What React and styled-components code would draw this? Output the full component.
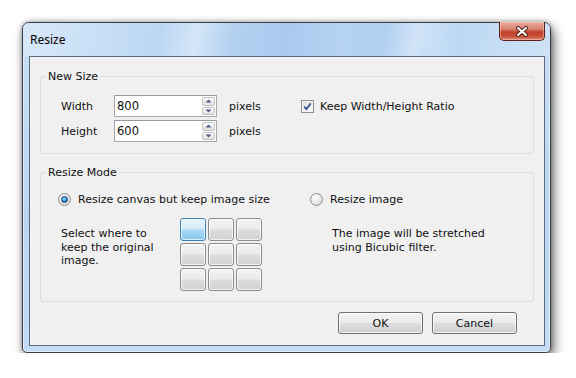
import React from 'react';
import styled, { createGlobalStyle } from 'styled-components';

const GlobalStyle = createGlobalStyle`
  html, body {
    margin: 0;
    background: #fff;
  }
  body {
    font-family: "DejaVu Sans", sans-serif;
    font-size: 11px;
    color: #111;
  }
`;

const Page = styled.div`
  padding: 22px 0 0 22px;
`;

const Window = styled.div`
  box-sizing: border-box;
  width: 529px;
  height: 331px;
  display: flex;
  flex-direction: column;
  padding: 0 5px 6px 6px;
  border: 1px solid #3a3f47;
  border-radius: 7px 7px 5px 5px;
  background: linear-gradient(180deg, #c9def5 0%, #bcd6f1 60%, #c3dbf4 100%);
  box-shadow: 3px 5px 12px rgba(0, 0, 0, 0.55), 0 0 5px rgba(0, 0, 0, 0.35),
    inset 0 0 0 1px rgba(255, 255, 255, 0.55);
`;

const TitleBar = styled.div`
  height: 33px;
  margin: 0 -5px 0 -6px;
  padding: 0 5px 0 7px;
  display: flex;
  justify-content: space-between;
  align-items: flex-start;
  border-radius: 6px 6px 0 0;
  background: linear-gradient(
    100deg,
    #d8e8f8 0%,
    #c9dff6 14%,
    #bcd7f4 26%,
    #d3e5f8 33%,
    #b3d0f0 40%,
    #a9c9ee 50%,
    #b5d2f1 60%,
    #b0cff1 68%,
    #d0e3f8 74%,
    #bdd8f4 82%,
    #cfe2f7 100%
  );
`;

const Title = styled.span`
  margin-top: 8px;
  font-family: "Segoe UI", "Noto Sans", "Liberation Sans", sans-serif;
  font-size: 12px;
  color: #000;
`;

const CloseButton = styled.div`
  width: 46px;
  height: 19px;
  margin-top: -1px;
  box-sizing: border-box;
  display: flex;
  align-items: center;
  justify-content: center;
  border: 1px solid #5a1f16;
  border-top: none;
  border-radius: 0 0 5px 5px;
  background: linear-gradient(180deg, #e9a99b 0%, #d9826f 40%, #c0412a 55%, #c8513a 80%, #dd8a74 100%);
  box-shadow: inset 0 0 0 1px rgba(255, 220, 210, 0.45);
`;

const Client = styled.div`
  flex: 1;
  display: flex;
  flex-direction: column;
  padding: 13px 10px 11px 10px;
  background: #f0f0f0;
  border: 1px solid #5b6c7d;
`;

const Group = styled.fieldset`
  margin: 0;
  padding: 0;
  border: 1px solid #d5dfe5;
  border-radius: 3px;
  min-width: 0;
  & + & {
    margin-top: 12px;
  }
`;

const Legend = styled.legend`
  margin-left: 5px;
  padding: 0 2px;
  line-height: 13px;
`;

const GroupBody = styled.div`
  padding: ${(p) => p.$pad};
`;

const SizeRows = styled.div`
  display: grid;
  grid-template-columns: 53px 103px 84px 1fr;
  grid-template-rows: 22px 22px;
  row-gap: 3px;
  align-items: center;
`;

const Label = styled.span``;

const Unit = styled.span`
  padding-left: 12px;
`;

const SpinField = styled.div`
  box-sizing: border-box;
  height: 22px;
  display: flex;
  align-items: stretch;
  background: #fff;
  border: 1px solid #a7a7a7;
  border-top-color: #9a9a9a;
`;

const SpinValue = styled.span`
  flex: 1;
  display: flex;
  align-items: center;
  padding-left: 2px;
  font-size: 11.5px;
`;

const SpinButtons = styled.div`
  width: 13px;
  margin: 1px 1px 1px 0;
  display: flex;
  flex-direction: column;
  gap: 1px;
`;

const SpinButton = styled.div`
  flex: 1;
  display: flex;
  align-items: center;
  justify-content: center;
  border: 1px solid #c2c2c2;
  border-radius: 2px;
  background: linear-gradient(180deg, #fafafa 0%, #ececec 50%, #e1e1e1 100%);
`;

const CheckRow = styled.label`
  grid-column: 4;
  grid-row: 1;
  display: flex;
  align-items: center;
  gap: 6px;
`;

const Box = styled.span`
  box-sizing: border-box;
  width: 13px;
  height: 13px;
  display: flex;
  align-items: center;
  justify-content: center;
  border: 1px solid #8e8f8f;
  background: linear-gradient(135deg, #d6d6d6 0%, #f4f4f4 60%, #fdfdfd 100%);
  box-shadow: inset 0 0 0 1px #f4f4f4;
`;

const ModeColumns = styled.div`
  display: grid;
  grid-template-columns: 252px 1fr;
`;

const Mode = styled.div`
  display: flex;
  flex-direction: column;
`;

const RadioRow = styled.label`
  display: flex;
  align-items: center;
  gap: 7px;
  height: 13px;
`;

const Radio = styled.span`
  box-sizing: border-box;
  width: 13px;
  height: 13px;
  border-radius: 50%;
  display: flex;
  align-items: center;
  justify-content: center;
  border: 1px solid #8e8f8f;
  background: radial-gradient(circle at 40% 35%, #fefefe 0%, #e6e6e6 55%, #cfcfcf 100%);
  &::after {
    content: "";
    display: ${(p) => (p.$checked ? 'block' : 'none')};
    width: 5px;
    height: 5px;
    border-radius: 50%;
    border: 1px solid #1b3f6e;
    background: radial-gradient(circle at 40% 35%, #a8e3ff 0%, #2a8ad4 55%, #14508f 100%);
  }
`;

const ModeBody = styled.div`
  display: flex;
  margin-top: 12px;
  padding-left: ${(p) => p.$indent}px;
`;

const Note = styled.p`
  box-sizing: border-box;
  flex: none;
  margin: 9px 0 0;
  width: ${(p) => p.$width}px;
  padding-right: ${(p) => p.$gap || 0}px;
  line-height: 13.5px;
`;

const AnchorGrid = styled.div`
  display: grid;
  grid-template-columns: repeat(3, 26px);
  grid-auto-rows: 23px;
  gap: 2px;
`;

const AnchorCell = styled.div`
  box-sizing: border-box;
  border-radius: 3px;
  border: 1px solid ${(p) => (p.$selected ? '#3c7fb1' : '#8c8c8c')};
  background: ${(p) =>
    p.$selected
      ? 'linear-gradient(180deg, #e8f5fd 0%, #d3ecfa 48%, #a7d9f5 52%, #86c6ec 100%)'
      : 'linear-gradient(180deg, #f3f3f3 0%, #ebebeb 48%, #dddddd 52%, #d2d2d2 100%)'};
  box-shadow: inset 0 0 0 1px rgba(255, 255, 255, 0.7);
`;

const ButtonRow = styled.div`
  margin-top: auto;
  display: flex;
  justify-content: flex-end;
  gap: 9px;
  padding-right: 17px;
`;

const Button = styled.button`
  width: 85px;
  height: 22px;
  padding: 0;
  font: inherit;
  color: #111;
  border: 1px solid #707070;
  border-radius: 3px;
  background: linear-gradient(180deg, #f2f2f2 0%, #ebebeb 48%, #dddddd 52%, #cfcfcf 100%);
  box-shadow: inset 0 0 0 1px rgba(255, 255, 255, 0.75);
`;

const Arrow = ({ up }) => (
  <svg width="7" height="4" viewBox="0 0 7 4">
    <path d={up ? 'M0.5 3.5 L3.5 0.5 L6.5 3.5 Z' : 'M0.5 0.5 L3.5 3.5 L6.5 0.5 Z'} fill="#4c6087" />
  </svg>
);

const SpinBox = ({ value }) => (
  <SpinField>
    <SpinValue>{value}</SpinValue>
    <SpinButtons>
      <SpinButton>
        <Arrow up />
      </SpinButton>
      <SpinButton>
        <Arrow />
      </SpinButton>
    </SpinButtons>
  </SpinField>
);

const CloseGlyph = () => (
  <svg width="14" height="11" viewBox="0 0 14 11">
    <path d="M3 2 L11 9 M11 2 L3 9" stroke="#4a1a12" strokeWidth="4" strokeLinecap="round" />
    <path d="M3 2 L11 9 M11 2 L3 9" stroke="#fff" strokeWidth="2.2" strokeLinecap="round" />
  </svg>
);

const CheckMark = () => (
  <svg width="9" height="9" viewBox="0 0 9 9">
    <path d="M1.2 4.6 L3.4 7 L7.8 1.4" fill="none" stroke="#3b4f92" strokeWidth="1.8" />
  </svg>
);

const App = () => {
  return (
    <Page>
      <GlobalStyle />
      <Window>
        <TitleBar>
          <Title>Resize</Title>
          <CloseButton>
            <CloseGlyph />
          </CloseButton>
        </TitleBar>
        <Client>
          <Group>
            <Legend>New Size</Legend>
            <GroupBody $pad="12px 10px 11px 20px">
              <SizeRows>
                <Label>Width</Label>
                <SpinBox value="800" />
                <Unit>pixels</Unit>
                <CheckRow>
                  <Box>
                    <CheckMark />
                  </Box>
                  Keep Width/Height Ratio
                </CheckRow>
                <Label>Height</Label>
                <SpinBox value="600" />
                <Unit>pixels</Unit>
              </SizeRows>
            </GroupBody>
          </Group>
          <Group>
            <Legend>Resize Mode</Legend>
            <GroupBody $pad="14px 10px 10px 17px">
              <ModeColumns>
                <Mode>
                  <RadioRow>
                    <Radio $checked />
                    Resize canvas but keep image size
                  </RadioRow>
                  <ModeBody $indent={3}>
                    <Note $width={119} $gap={7}>Select where to keep the original image.</Note>
                    <AnchorGrid>
                      {Array.from({ length: 9 }).map((_, i) => (
                        <AnchorCell key={i} $selected={i === 0} />
                      ))}
                    </AnchorGrid>
                  </ModeBody>
                </Mode>
                <Mode>
                  <RadioRow>
                    <Radio />
                    Resize image
                  </RadioRow>
                  <ModeBody $indent={22}>
                    <Note $width={176}>The image will be stretched using Bicubic filter.</Note>
                  </ModeBody>
                </Mode>
              </ModeColumns>
            </GroupBody>
          </Group>
          <ButtonRow>
            <Button>OK</Button>
            <Button>Cancel</Button>
          </ButtonRow>
        </Client>
      </Window>
    </Page>
  );
};

export default App;
